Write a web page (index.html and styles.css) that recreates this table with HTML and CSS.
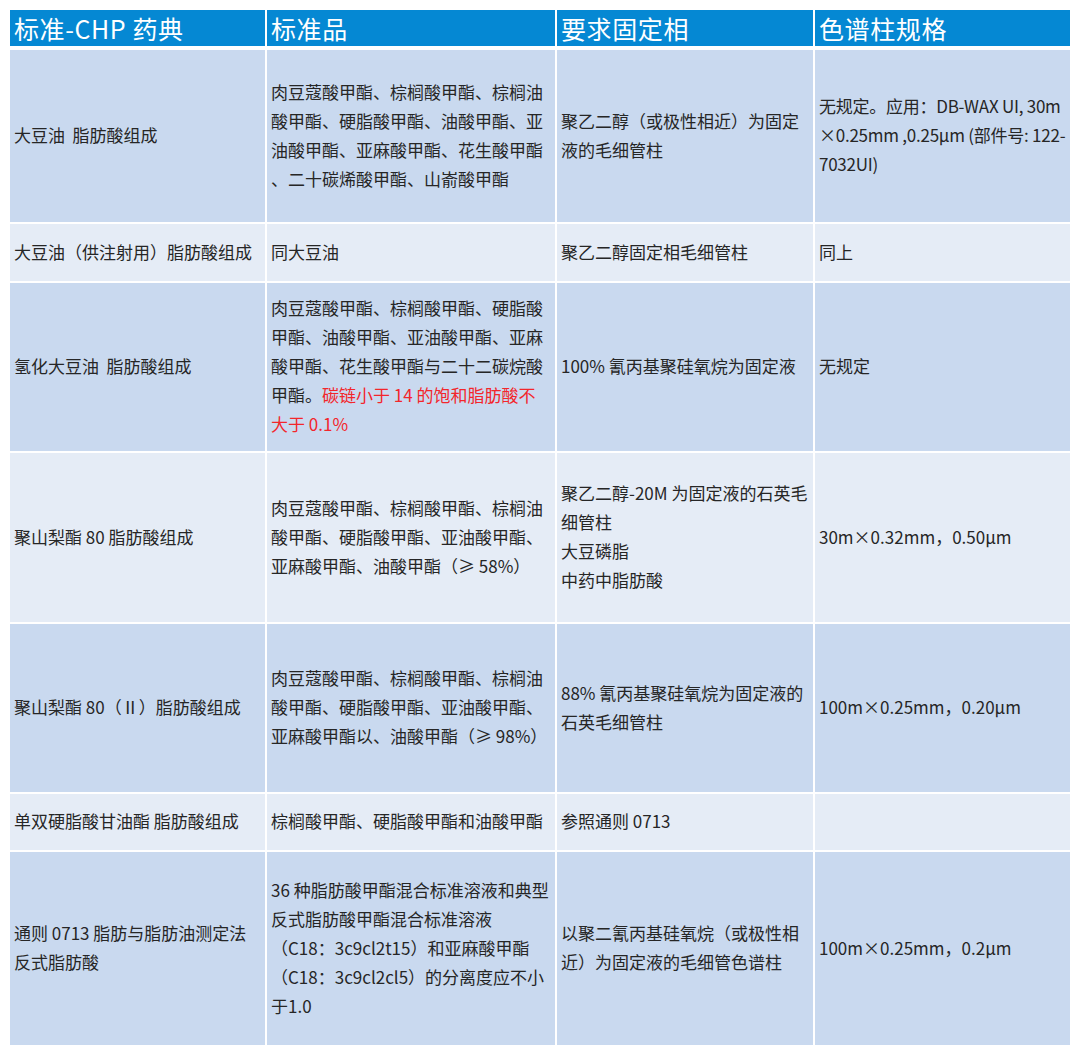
FILE: index.html
```html
<!DOCTYPE html>
<html lang="zh-CN">
<head>
<meta charset="utf-8">
<title>脂肪酸组成色谱柱</title>
<link rel="stylesheet" href="styles.css">
</head>
<body>
<table class="spec">
  <colgroup>
    <col class="c1"><col class="c2"><col class="c3"><col class="c4">
  </colgroup>
  <thead>
    <tr class="head">
      <th>标准-CHP 药典</th>
      <th>标准品</th>
      <th>要求固定相</th>
      <th>色谱柱规格</th>
    </tr>
  </thead>
  <tbody>
    <tr class="dark r1">
      <td>大豆油&nbsp;&nbsp;脂肪酸组成</td>
      <td>肉豆蔻酸甲酯、棕榈酸甲酯、棕榈油<br>酸甲酯、硬脂酸甲酯、油酸甲酯、亚<br>油酸甲酯、亚麻酸甲酯、花生酸甲酯<br>、二十碳烯酸甲酯、山嵛酸甲酯</td>
      <td>聚乙二醇（或极性相近）为固定<br>液的毛细管柱</td>
      <td class="tight">无规定。应用：DB-WAX UI, 30m<br>×0.25mm ,0.25μm (部件号: 122-<br>7032UI)</td>
    </tr>
    <tr class="light r2">
      <td>大豆油（供注射用）脂肪酸组成</td>
      <td>同大豆油</td>
      <td>聚乙二醇固定相毛细管柱</td>
      <td>同上</td>
    </tr>
    <tr class="dark r3">
      <td>氢化大豆油&nbsp;&nbsp;脂肪酸组成</td>
      <td>肉豆蔻酸甲酯、棕榈酸甲酯、硬脂酸<br>甲酯、油酸甲酯、亚油酸甲酯、亚麻<br>酸甲酯、花生酸甲酯与二十二碳烷酸<br>甲酯。<span class="warn">碳链小于 14 的饱和脂肪酸不<br>大于 0.1%</span></td>
      <td>100% 氰丙基聚硅氧烷为固定液</td>
      <td>无规定</td>
    </tr>
    <tr class="light r4">
      <td>聚山梨酯 80 脂肪酸组成</td>
      <td>肉豆蔻酸甲酯、棕榈酸甲酯、棕榈油<br>酸甲酯、硬脂酸甲酯、亚油酸甲酯、<br>亚麻酸甲酯、油酸甲酯（≥ 58%）</td>
      <td>聚乙二醇-20M 为固定液的石英毛<br>细管柱<br>大豆磷脂<br>中药中脂肪酸</td>
      <td>30m×0.32mm，0.50μm</td>
    </tr>
    <tr class="dark r5">
      <td>聚山梨酯 80（Ⅱ）脂肪酸组成</td>
      <td>肉豆蔻酸甲酯、棕榈酸甲酯、棕榈油<br>酸甲酯、硬脂酸甲酯、亚油酸甲酯、<br>亚麻酸甲酯以、油酸甲酯（≥ 98%）</td>
      <td>88% 氰丙基聚硅氧烷为固定液的<br>石英毛细管柱</td>
      <td>100m×0.25mm，0.20μm</td>
    </tr>
    <tr class="light r6">
      <td>单双硬脂酸甘油酯 脂肪酸组成</td>
      <td>棕榈酸甲酯、硬脂酸甲酯和油酸甲酯</td>
      <td>参照通则 0713</td>
      <td></td>
    </tr>
    <tr class="dark r7">
      <td>通则 0713 脂肪与脂肪油测定法<br>反式脂肪酸</td>
      <td>36 种脂肪酸甲酯混合标准溶液和典型<br>反式脂肪酸甲酯混合标准溶液<br>（C18：3c9cl2t15）和亚麻酸甲酯<br>（C18：3c9cl2cl5）的分离度应不小<br>于1.0</td>
      <td>以聚二氰丙基硅氧烷（或极性相<br>近）为固定液的毛细管色谱柱</td>
      <td>100m×0.25mm，0.2μm</td>
    </tr>
  </tbody>
</table>
</body>
</html>
```

FILE: styles.css
```css
html, body {
  margin: 0;
  padding: 0;
  background: #ffffff;
}

body {
  padding: 8px;
  font-family: "Noto Sans CJK SC", "Noto Sans", sans-serif;
  color: #262626;
}

.spec {
  border-collapse: separate;
  border-spacing: 2px;
  table-layout: fixed;
  width: 1064px;
}

.c1 { width: 255px; }
.c2 { width: 288px; }
.c3 { width: 256px; }
.c4 { width: 255px; }

.spec th,
.spec td {
  padding: 0 4px;
  text-align: left;
  vertical-align: middle;
  white-space: nowrap;
  overflow: hidden;
}

.head th {
  height: 38px;
  box-sizing: border-box;
  border-bottom: 2px solid transparent;
  background-clip: padding-box;
  background-color: #0588d3;
  color: #ffffff;
  font-size: 25px;
  font-weight: 400;
  letter-spacing: 0.6px;
  line-height: 36px;
}

.spec td {
  padding: 0 2px 3px 4px;
  font-size: 17px;
  line-height: 29px;
  letter-spacing: 0;
}

.spec td.tight {
  letter-spacing: -0.25px;
}

.dark td { background: #c9d9ef; }
.light td { background: #e5ecf6; }

.r1 { height: 172px; }
.r2 { height: 57px; }
.r3 { height: 168px; }
.r4 { height: 169px; }
.r5 { height: 168px; }
.r6 { height: 56px; }
.r7 { height: 193px; }

.warn { color: #f3262b; }
```
